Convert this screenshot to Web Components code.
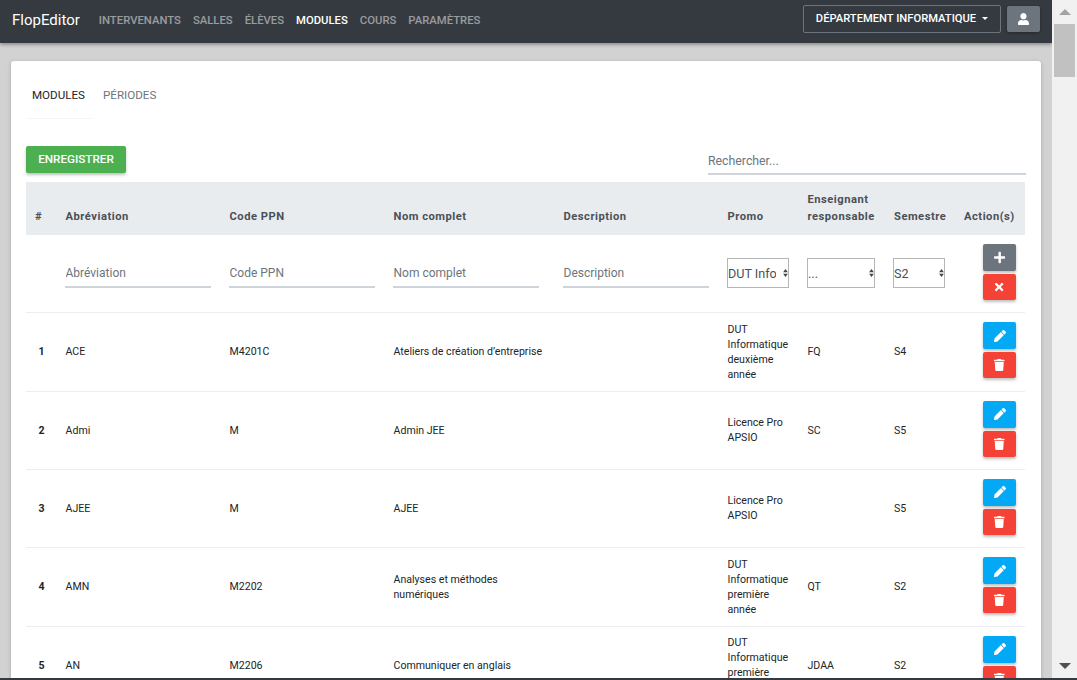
<!DOCTYPE html>
<html lang="fr">
<head>
<meta charset="utf-8">
<title>FlopEditor</title>
<style>
    html, body { margin: 0; height: 100%; overflow: hidden; }
    body { background: #d2d2d2; font-family: Roboto, "Liberation Sans", sans-serif; }
    flop-app { height: 100vh; }
</style>
</head>
<body>
<flop-app>
    <flop-navbar slot="nav"></flop-navbar>
    <flop-card>
        <flop-tabs></flop-tabs>
        <flop-toolbar></flop-toolbar>
        <modules-table></modules-table>
    </flop-card>
</flop-app>
<script>
const ICONS = {
    user: ["0 0 448 512", "M224 256c70.7 0 128-57.3 128-128S294.7 0 224 0 96 57.3 96 128s57.3 128 128 128zm89.6 32h-16.7c-22.2 10.2-46.9 16-72.9 16s-50.6-5.8-72.9-16h-16.7C60.2 288 0 348.2 0 422.4V464c0 26.5 21.5 48 48 48h352c26.5 0 48-21.5 48-48v-41.6c0-74.2-60.2-134.4-134.4-134.4z"],
    plus: ["0 0 448 512", "M416 208H272V64c0-17.67-14.33-32-32-32h-32c-17.67 0-32 14.33-32 32v144H32c-17.67 0-32 14.33-32 32v32c0 17.67 14.33 32 32 32h144v144c0 17.67 14.33 32 32 32h32c17.67 0 32-14.33 32-32V304h144c17.67 0 32-14.33 32-32v-32c0-17.67-14.33-32-32-32z"],
    times: ["0 0 352 512", "M242.72 256l100.07-100.07c12.28-12.28 12.28-32.19 0-44.48l-22.24-22.24c-12.28-12.28-32.19-12.28-44.48 0L176 189.28 75.93 89.21c-12.28-12.28-32.19-12.28-44.48 0L9.21 111.45c-12.28 12.28-12.28 32.19 0 44.48L109.28 256 9.21 356.07c-12.28 12.28-12.28 32.19 0 44.48l22.24 22.24c12.28 12.28 32.2 12.28 44.48 0L176 322.72l100.07 100.07c12.28 12.28 32.2 12.28 44.48 0l22.24-22.24c12.28-12.28 12.28-32.19 0-44.48L242.72 256z"],
    pencil: ["0 0 512 512", "M497.9 142.1l-46.1 46.1c-4.7 4.7-12.3 4.7-17 0l-111-111c-4.7-4.7-4.7-12.3 0-17l46.1-46.1c18.7-18.7 49.1-18.7 67.9 0l60.1 60.1c18.8 18.7 18.8 49.1 0 67.9zM284.2 99.8L21.6 362.4.4 483.9c-2.9 16.4 11.4 30.6 27.8 27.8l121.5-21.3 262.6-262.6c4.7-4.7 4.7-12.3 0-17l-111-111c-4.8-4.7-12.4-4.7-17.1 0z"],
    trash: ["0 0 448 512", "M432 32H312l-9.4-18.7A24 24 0 0 0 281.1 0H166.8a23.72 23.72 0 0 0-21.4 13.3L136 32H16A16 16 0 0 0 0 48v32a16 16 0 0 0 16 16h416a16 16 0 0 0 16-16V48a16 16 0 0 0-16-16zM53.2 467a48 48 0 0 0 47.9 45h245.8a48 48 0 0 0 47.9-45L416 128H32z"]
};

function icon(name, height) {
    const [box, d] = ICONS[name];
    return `<svg viewBox="${box}" height="${height}" fill="currentColor" aria-hidden="true"><path d="${d}"/></svg>`;
}

// page frame: content column and the window scrollbar
class FlopApp extends HTMLElement {
    constructor() {
        super();
        this.attachShadow({ mode: "open" });
        this.shadowRoot.innerHTML = `
        <style>
            :host { display: grid; grid-template-columns: 1052px 25px; grid-template-rows: 678px 2px; overflow: hidden; }
            .page { display: flex; flex-direction: column; overflow: hidden; }
            .bar { display: flex; flex-direction: column; align-items: center; background: #f1f1f1; }
            .thumb { width: 21px; height: 53px; background: #c1c1c1; margin-bottom: auto; }
            .up, .down { width: 0; height: 0; border-left: 6px solid transparent; border-right: 6px solid transparent; }
            .up { border-bottom: 6px solid #a3a3a3; margin: 9px 0 9px; }
            .down { border-top: 6px solid #505050; margin-bottom: 9px; }
            .edge { grid-column: 1 / 3; background: #343a40; }
        </style>
        <div class="page"><slot name="nav"></slot><slot></slot></div>
        <div class="bar"><div class="up"></div><div class="thumb"></div><div class="down"></div></div>
        <div class="edge"></div>
        `;
    }
}

class FlopNavbar extends HTMLElement {
    constructor() {
        super();
        this.attachShadow({ mode: "open" });
        const links = [["INTERVENANTS"], ["SALLES"], ["ÉLÈVES"], ["MODULES", true], ["COURS"], ["PARAMÈTRES"]];
        this.shadowRoot.innerHTML = `
        <style>
            :host { display: flex; flex: none; align-items: center; height: 43px; padding: 0 12px 5px; box-sizing: border-box; background: #343a40; box-shadow: 0 2px 3px rgba(0,0,0,.3); position: relative; z-index: 2; }
            .brand { color: #fff; font-size: 15px; margin: 2px 19px 0 0; }
            nav { display: flex; gap: 12px; font-size: 11.3px; font-weight: 500; flex: 1; margin-top: 2px; }
            nav a { color: rgba(255,255,255,.5); }
            nav a.active { color: #fff; }
            .dept { display: flex; align-items: center; gap: 6px; box-sizing: border-box; width: 198px; height: 28px; padding-bottom: 1px; justify-content: center; border: 1px solid #6c757d; border-radius: 2px; color: #fff; font-size: 11.2px; font-weight: 500; }
            .caret { border-top: 3.5px solid #fff; border-left: 3.5px solid transparent; border-right: 3.5px solid transparent; }
            .user { display: flex; align-items: center; justify-content: center; width: 33px; height: 26px; margin-left: 6px; background: #6c757d; color: #fff; border-radius: 2px; box-shadow: 0 1px 3px rgba(0,0,0,.3); }
        </style>
        <span class="brand">FlopEditor</span>
        <nav>${links.map(([t, on]) => `<a class="${on ? "active" : ""}">${t}</a>`).join("")}</nav>
        <div class="dept">DÉPARTEMENT INFORMATIQUE <span class="caret"></span></div>
        <div class="user">${icon("user", 12.5)}</div>
        `;
    }
}

class FlopCard extends HTMLElement {
    constructor() {
        super();
        this.attachShadow({ mode: "open" });
        this.shadowRoot.innerHTML = `
        <style>
            :host { display: block; flex: none; margin: 18px 11px 0; padding: 15px; background: #fff; border-radius: 3px; box-shadow: 0 1px 4px rgba(0,0,0,.2); }
        </style>
        <slot></slot>
        `;
    }
}

class FlopTabs extends HTMLElement {
    constructor() {
        super();
        this.attachShadow({ mode: "open" });
        this.shadowRoot.innerHTML = `
        <style>
            :host { display: flex; font-size: 11.6px; height: 43px; }
            .tab { box-sizing: border-box; padding: 12px 6px 0; color: #6c757d; }
            .tab.active { width: 66px; color: #212529; border-bottom: 1px solid #f5f5f5; }
            .tab.next { padding-left: 11px; }
        </style>
        <div class="tab active">MODULES</div>
        <div class="tab next">PÉRIODES</div>
        `;
    }
}

class FlopButton extends HTMLElement {
    constructor() {
        super();
        this.attachShadow({ mode: "open" });
        this.shadowRoot.innerHTML = `
        <style>
            :host { display: flex; align-items: center; justify-content: center; box-sizing: border-box; color: #fff; border-radius: 2px; box-shadow: 0 2px 3px rgba(0,0,0,.25); }
        </style>
        <slot></slot>
        `;
    }
    connectedCallback() {
        this.style.background = this.getAttribute("color");
    }
}

class FlopToolbar extends HTMLElement {
    constructor() {
        super();
        this.attachShadow({ mode: "open" });
        this.shadowRoot.innerHTML = `
        <style>
            :host { display: flex; justify-content: space-between; align-items: flex-start; margin-top: 27px; height: 36px; }
            flop-button { width: 100px; height: 27px; padding-bottom: 2px; font-size: 11.7px; font-weight: 500; }
            input { width: 318px; height: 28px; box-sizing: border-box; border: 0; border-bottom: 1px solid #ced4da; padding: 3px 0 0; margin: 0; outline: 0; font: 12.3px Roboto, "Liberation Sans", sans-serif; box-shadow: 0 1px 0 #ced4da; }
            input::placeholder { color: #6c757d; opacity: 1; }
        </style>
        <flop-button color="#4caf50">ENREGISTRER</flop-button>
        <input type="text" placeholder="Rechercher...">
        `;
    }
}

const MODULES = [
    ["1", "ACE", "M4201C", "Ateliers de création d’entreprise", "", "DUT Informatique deuxième année", "FQ", "S4"],
    ["2", "Admi", "M", "Admin JEE", "", "Licence Pro APSIO", "SC", "S5"],
    ["3", "AJEE", "M", "AJEE", "", "Licence Pro APSIO", "", "S5"],
    ["4", "AMN", "M2202", "Analyses et méthodes numériques", "", "DUT Informatique première année", "QT", "S2"],
    ["5", "AN", "M2206", "Communiquer en anglais", "", "DUT Informatique première année", "JDAA", "S2"]
];

class ModulesTable extends HTMLElement {
    constructor() {
        super();
        this.attachShadow({ mode: "open" });
        const heads = ["#", "Abréviation", "Code PPN", "Nom complet", "Description", "Promo", "Enseignant responsable", "Semestre", "Action(s)"];
        const widths = [27, 164, 164, 170, 164, 80, 86, 71, 73];
        const rowHeights = [79, 78, 78, 79, 78];
        const select = (text, w) => `<span class="sel" style="width:${w}px"><select><option>${text}</option></select><svg viewBox="0 0 6 10" width="5" height="8"><path d="M3 0l3 4H0zM3 10l3-4H0z" fill="#444"/></svg></span>`;
        const input = (text) => `<td class="field"><input placeholder="${text}"></td>`;
        const actions = (top, bottom) => `<td class="acts">${top}${bottom}</td>`;
        this.shadowRoot.innerHTML = `
        <style>
            :host { display: block; margin-right: 1px; }
            table { table-layout: fixed; width: 999px; border-collapse: collapse; font-size: 10.6px; color: #212529; }
            th { background: #e9ecef; color: #495057; font-size: 11.2px; font-weight: 700; letter-spacing: .5px; line-height: 17px; text-align: left; vertical-align: bottom; padding: 9px 12px 10px 12.5px; height: 34px; }
            td { box-sizing: border-box; padding: 0 12px 0 12.5px; line-height: 15px; border-bottom: 1px solid #eceeef; vertical-align: middle; }
            tr.add td { height: 77px; }
            th.hash { padding: 9px 0 10px 9px; }
            th:nth-child(9) { padding: 9px 0 10px 12px; }
            td.num { font-weight: 700; padding-right: 0; }
            th:nth-child(8), td:nth-child(8) { padding-left: 13px; }
            td:nth-child(4) { padding-right: 6px; }
            td.field { padding: 0 6px 0 12px; }
            input { display: block; width: 146px; box-sizing: border-box; height: 27px; padding: 0 0 0 .5px; border: 0; border-bottom: 1px solid #ced4da; box-shadow: 0 1px 0 #ced4da; outline: 0; font: 12px Roboto, "Liberation Sans", sans-serif; }
            input::placeholder { color: #6c757d; opacity: 1; }
            td.pick { padding: 0 6px 0 12px; }
            .sel { position: relative; display: block; height: 30px; }
            .sel select { appearance: none; width: 100%; height: 100%; box-sizing: border-box; border: 1px solid #b5b5b5; border-radius: 0; background: #fff; padding: 0 12px 0 0; font: 12.6px Roboto, "Liberation Sans", sans-serif; color: #495057; }
            .sel svg { position: absolute; right: 1px; top: 11px; }
            td.acts { padding: 0 9px 3px 0; }
            td.acts flop-button { width: 33px; margin-left: auto; }
            td.acts flop-button + flop-button { margin-top: 3px; }
            .b1 { height: 27px; }
            .b2 { height: 26px; }
        </style>
        <table>
            <colgroup>${widths.map(w => `<col style="width:${w}px">`).join("")}</colgroup>
            <thead><tr>${heads.map((h, i) => `<th class="${i ? "" : "hash"}">${h}</th>`).join("")}</tr></thead>
            <tbody>
                <tr class="add">
                    <td></td>
                    ${input("Abréviation")}${input("Code PPN")}${input("Nom complet")}${input("Description")}
                    <td class="pick">${select("DUT Info", 62)}</td>
                    <td class="pick">${select("...", 68)}</td>
                    <td class="pick">${select("S2", 52)}</td>
                    ${actions(`<flop-button class="b1" color="#6c757d">${icon("plus", 13)}</flop-button>`, `<flop-button class="b2" color="#f44336">${icon("times", 12)}</flop-button>`)}
                </tr>
                ${MODULES.map((m, r) => `<tr style="height:${rowHeights[r]}px">
                    <td class="num">${m[0]}</td>
                    ${m.slice(1).map(c => `<td>${c}</td>`).join("")}
                    ${actions(`<flop-button class="b1" color="#03a9f4">${icon("pencil", 12)}</flop-button>`, `<flop-button class="b2" color="#f44336">${icon("trash", 12)}</flop-button>`)}
                </tr>`).join("")}
            </tbody>
        </table>
        `;
    }
}

customElements.define("flop-app", FlopApp);
customElements.define("flop-navbar", FlopNavbar);
customElements.define("flop-card", FlopCard);
customElements.define("flop-tabs", FlopTabs);
customElements.define("flop-button", FlopButton);
customElements.define("flop-toolbar", FlopToolbar);
customElements.define("modules-table", ModulesTable);
</script>
</body>
</html>
